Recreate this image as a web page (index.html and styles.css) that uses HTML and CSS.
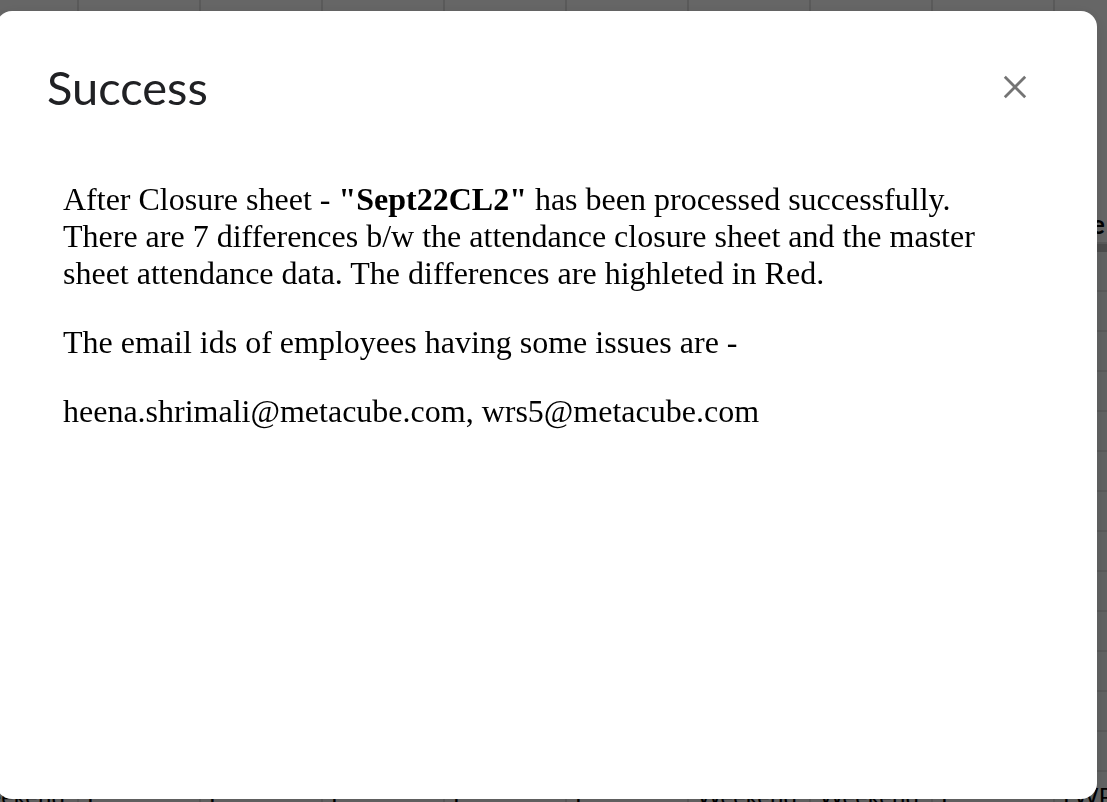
FILE: index.html
```
<!DOCTYPE html>
<html lang="en">
<head>
<meta charset="utf-8">
<title>Success</title>
<link rel="stylesheet" href="styles.css">
</head>
<body>
<div class="sheet" aria-hidden="true">
<table class="grid">
<thead>
<tr class="head"><th></th><th></th><th></th><th></th><th></th><th></th><th></th><th></th><th></th><th>e</th></tr>
<tr class="freeze"><td colspan="10"></td></tr>
</thead>
<tbody>
<tr><td></td><td></td><td></td><td></td><td></td><td></td><td></td><td></td><td></td><td></td></tr>
<tr><td></td><td></td><td></td><td></td><td></td><td></td><td></td><td></td><td></td><td></td></tr>
<tr><td></td><td></td><td></td><td></td><td></td><td></td><td></td><td></td><td></td><td></td></tr>
<tr><td></td><td></td><td></td><td></td><td></td><td></td><td></td><td></td><td></td><td></td></tr>
<tr><td></td><td></td><td></td><td></td><td></td><td></td><td></td><td></td><td></td><td></td></tr>
<tr><td></td><td></td><td></td><td></td><td></td><td></td><td></td><td></td><td></td><td></td></tr>
<tr><td></td><td></td><td></td><td></td><td></td><td></td><td></td><td></td><td></td><td></td></tr>
<tr><td></td><td></td><td></td><td></td><td></td><td></td><td></td><td></td><td></td><td></td></tr>
<tr><td></td><td></td><td></td><td></td><td></td><td></td><td></td><td></td><td></td><td></td></tr>
<tr><td></td><td></td><td></td><td></td><td></td><td></td><td></td><td></td><td></td><td></td></tr>
<tr><td></td><td></td><td></td><td></td><td></td><td></td><td></td><td></td><td></td><td></td></tr>
<tr><td></td><td></td><td></td><td></td><td></td><td></td><td></td><td></td><td></td><td></td></tr>
<tr><td></td><td></td><td></td><td></td><td></td><td></td><td></td><td></td><td></td><td></td></tr>
<tr><td>Weekend</td><td>P</td><td>P</td><td>P</td><td>P</td><td>P</td><td>Weekend</td><td>Weekend</td><td>P</td><td>LWP</td></tr>
</tbody>
</table>
</div>
<div class="overlay">
<section class="dialog" role="dialog" aria-modal="true" aria-labelledby="dialog-title">
<header class="dialog-head">
<h1 class="dialog-title" id="dialog-title">Success</h1>
<button class="close" type="button" aria-label="Close">
<svg class="close-icon" viewBox="0 0 24 24" aria-hidden="true"><path d="M1.8 1.8 22.2 22.2M22.2 1.8 1.8 22.2"/></svg>
</button>
</header>
<div class="message">
<p>After Closure sheet - <b>"Sept22CL2"</b> has been processed successfully. There are 7 differences b/w the attendance closure sheet and the master sheet attendance data. The differences are highleted in Red.</p>
<p>The email ids of employees having some issues are -</p>
<p>heena.shrimali@metacube.com, wrs5@metacube.com</p>
</div>
</section>
</div>
</body>
</html>
```
FILE: styles.css
```
* {
  box-sizing: border-box;
}

body {
  margin: 0;
  height: 100vh;
  overflow: hidden;
}

.sheet {
  height: 100%;
  overflow: hidden;
  background: #fff;
}

.grid {
  width: 1220px;
  margin-left: -43px;
  table-layout: fixed;
  border-collapse: separate;
  border-spacing: 0;
  font: 24px/28px Lato, "Open Sans", sans-serif;
  color: #000;
}

.grid th,
.grid td {
  height: 40px;
  padding: 0 8px;
  border-right: 2px solid #e0e0e0;
  border-bottom: 2px solid #e0e0e0;
  text-align: left;
  vertical-align: bottom;
  white-space: nowrap;
}

.grid td:last-child {
  background: #f4f8f6;
}

.grid .head th {
  height: 244px;
  padding: 0 0 4px 36px;
  font-size: 26px;
}

.grid .freeze td {
  height: 8px;
  padding: 0;
  border: 0;
  background: #c0c0c0;
}

.overlay {
  position: fixed;
  inset: 0;
  display: flex;
  padding: 11px 10px 3px 0;
  background: rgba(0, 0, 0, 0.6);
}

.dialog {
  flex: 1;
  margin-left: -4px;
  padding: 50px 64px 48px 51px;
  border-radius: 16px;
  background: #fff;
  box-shadow: 0 4px 16px rgba(0, 0, 0, 0.12);
}

.dialog-head {
  display: flex;
  align-items: flex-start;
  justify-content: space-between;
}

.dialog-title {
  margin: 0;
  font: 400 47px/52px Lato, "Open Sans", sans-serif;
  color: #202124;
}

.close {
  display: flex;
  padding: 14px 6px;
  border: 0;
  background: none;
  cursor: pointer;
}

.close-icon {
  width: 24px;
  height: 24px;
  fill: none;
  stroke: #747474;
  stroke-width: 2.8;
}

.message {
  padding: 68px 32px 0 16px;
  font: 32px/37px "Liberation Serif", "Times New Roman", serif;
  color: #000;
}

.message p {
  margin: 0 0 32px;
}
```
